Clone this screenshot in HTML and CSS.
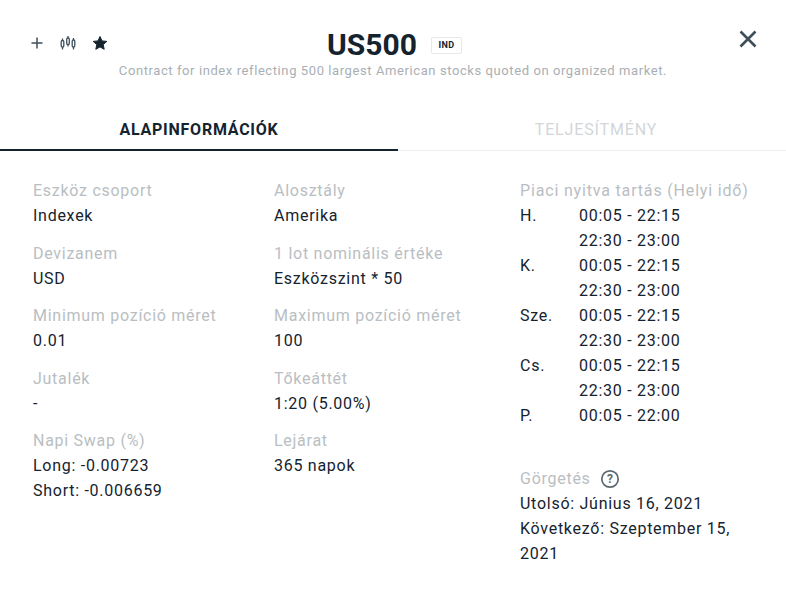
FILE: index.html
```html
<!DOCTYPE html>
<html lang="hu">
<head>
<meta charset="utf-8">
<title>US500</title>
<link rel="stylesheet" href="styles.css">
</head>
<body>
<main class="modal">
  <header class="head">
    <div class="tools">
      <svg class="ico" width="14" height="14" viewBox="0 0 14 14"><path d="M7 1.500v11M1.500 7h11" stroke="#3f4f5a" stroke-width="1.500" fill="none"/></svg>
      <svg class="ico" width="16" height="16" viewBox="0 0 16 16" fill="none" stroke="#3f4f5a" stroke-width="1.300"><path d="M2.500 3.500v11M8 1v10.500M13.500 3v11.500"/><rect x="1.200" y="5.500" width="2.600" height="6.500" rx="1.200" fill="#fff"/><rect x="6.700" y="3" width="2.600" height="6.500" rx="1.200" fill="#fff"/><rect x="12.200" y="5" width="2.600" height="7" rx="1.200" fill="#fff"/></svg>
      <svg class="ico" width="16" height="16" viewBox="0 0 16 16"><path d="M8 1.500l2 4.400 4.800.5-3.600 3.200 1 4.700L8 11.900l-4.200 2.400 1-4.700L1.200 6.400 6 5.900z" fill="#15232f" stroke="#15232f" stroke-linejoin="round"/></svg>
    </div>
    <div class="title-row"><h1>US500</h1><span class="badge">IND</span></div>
    <p class="sub">Contract for index reflecting 500 largest American stocks quoted on organized market.</p>
    <svg class="close" width="20" height="20" viewBox="0 0 20 20"><path d="M2.500 2.500l15 15M17.500 2.500l-15 15" stroke="#3f4f5a" stroke-width="2.600" fill="none"/></svg>
  </header>
  <nav class="tabs">
    <div class="tab active">ALAPINFORMÁCIÓK</div>
    <div class="tab">TELJESÍTMÉNY</div>
  </nav>
  <section class="cols">
    <div class="col c1">
      <dl><dt>Eszköz csoport</dt><dd>Indexek</dd></dl>
      <dl><dt>Devizanem</dt><dd>USD</dd></dl>
      <dl><dt>Minimum pozíció méret</dt><dd>0.01</dd></dl>
      <dl><dt>Jutalék</dt><dd>-</dd></dl>
      <dl><dt>Napi Swap (%)</dt><dd>Long: -0.00723</dd><dd>Short: -0.006659</dd></dl>
    </div>
    <div class="col c2">
      <dl><dt>Alosztály</dt><dd>Amerika</dd></dl>
      <dl><dt>1 lot nominális értéke</dt><dd>Eszközszint * 50</dd></dl>
      <dl><dt>Maximum pozíció méret</dt><dd>100</dd></dl>
      <dl><dt>Tőkeáttét</dt><dd>1:20 (5.00%)</dd></dl>
      <dl><dt>Lejárat</dt><dd>365 napok</dd></dl>
    </div>
    <div class="col c3">
      <dl><dt class="wide">Piaci nyitva tartás (Helyi idő)</dt></dl>
      <div class="hours">
        <span>H.</span><span>00:05 - 22:15</span><span></span><span>22:30 - 23:00</span>
        <span>K.</span><span>00:05 - 22:15</span><span></span><span>22:30 - 23:00</span>
        <span>Sze.</span><span>00:05 - 22:15</span><span></span><span>22:30 - 23:00</span>
        <span>Cs.</span><span>00:05 - 22:15</span><span></span><span>22:30 - 23:00</span>
        <span>P.</span><span>00:05 - 22:00</span>
      </div>
      <dl class="roll">
        <dt>Görgetés <svg class="help" width="20" height="20" viewBox="0 0 20 20"><circle cx="10" cy="10" r="8.200" fill="none" stroke="#5b6870" stroke-width="1.700"/><text x="10" y="14" text-anchor="middle" class="q">?</text></svg></dt>
        <dd>Utolsó: Június 16, 2021</dd>
        <dd>Következő: Szeptember 15, 2021</dd>
      </dl>
    </div>
  </section>
</main>
</body>
</html>
```
FILE: styles.css
```css
* { box-sizing: border-box; }
html, body { margin: 0; padding: 0; background: #fff; }
body { width: 786px; height: 589px; overflow: hidden; font-family: Roboto, "Liberation Sans", sans-serif; color: #15232f; }
.modal { display: flex; flex-direction: column; height: 100%; }
.head { position: relative; height: 106px; padding-top: 28px; text-align: center; }
.tools { position: absolute; left: 30px; top: 35px; display: flex; align-items: center; gap: 16px; }
.ico { display: block; }
.title-row { display: flex; justify-content: center; align-items: center; gap: 14px; height: 34px; padding-left: 3px; }
h1 { margin: 0; font-size: 30px; line-height: 34px; font-weight: 700; color: #15232f; }
.badge { width: 31px; height: 17px; margin-top: 1px; border: 1px solid #e6e8ea; border-radius: 2px; font-size: 9px; line-height: 15px; font-weight: 700; letter-spacing: .3px; }
.sub { margin: 0; font-size: 13px; line-height: 17px; letter-spacing: .59px; color: #a9afb4; }
.close { position: absolute; left: 738px; top: 29px; }
.tabs { display: flex; height: 45px; border-bottom: 1px solid #eceeef; }
.tab { flex: 1; padding-left: 8px; text-align: center; font-size: 16px; line-height: 48px; font-weight: 400; letter-spacing: .85px; color: #d3d6d9; }
.tab.active { flex: 0 0 398px; padding-left: 0; color: #15232f; font-weight: 700; letter-spacing: .75px; border-bottom: 2px solid #15232f; height: 45px; }
.cols { display: flex; padding: 27px 0 0 33px; font-size: 16px; line-height: 25px; letter-spacing: .73px; }
.col { display: flex; flex-direction: column; }
.c1 { width: 241px; }
.c2 { width: 246px; }
.c3 { width: 232px; }
dl { margin: 0 0 12.500px; }
dt { color: #b9bec2; }
dt.wide { letter-spacing: .83px; }
dd { margin: 0; }
.hours { display: grid; grid-template-columns: 59px 1fr; margin-top: -12.500px; }
.roll { margin-top: 37.500px; }
.help { vertical-align: -5px; margin-left: 5px; }
.q { font-size: 12px; font-weight: 700; fill: #5b6870; letter-spacing: 0; }
```
